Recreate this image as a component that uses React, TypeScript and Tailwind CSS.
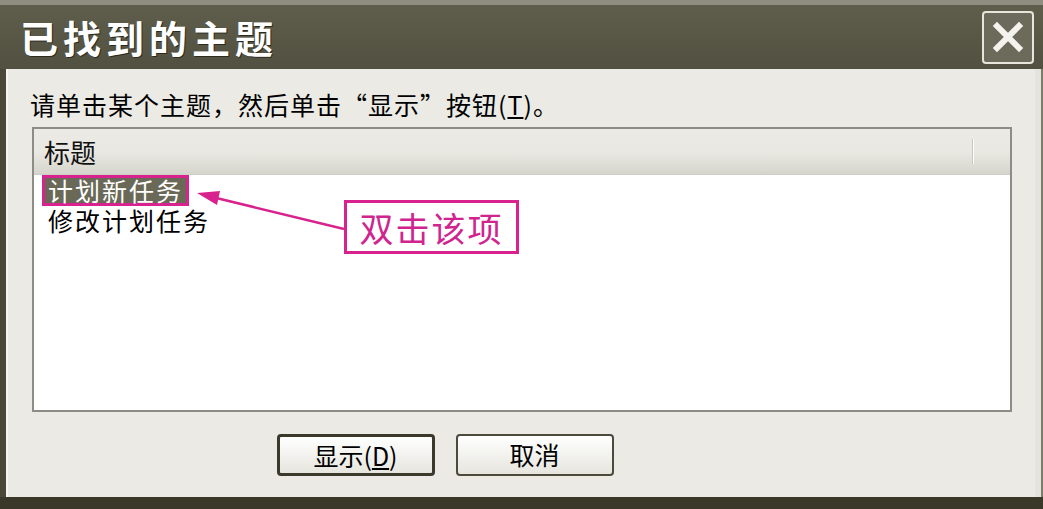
import React from 'react';

const cjk = { fontFamily: '"Noto Sans CJK SC", "Noto Sans", sans-serif' };

export default function App() {
    return (
        <div className="w-[1043px] h-[509px] flex flex-col bg-[#3d3b2b] overflow-hidden" style={cjk}>
            {/* top edge */}
            <div className="h-[5px] bg-[#8e8d80]" />

            {/* title bar */}
            <div className="h-[64px] flex items-center justify-between pl-[20px] pr-[9px] bg-gradient-to-b from-[#5f5d4b] to-[#525040]">
                <span className="text-[38px] leading-none tracking-[5px] text-white font-bold [text-shadow:1px_1px_0_#2c2b20]">
                    已找到的主题
                </span>
                <button className="w-[52px] h-[53px] rounded-[4px] border-2 border-[#e8e6dc] bg-[#6c6a5a] flex items-center justify-center">
                    <svg width="32" height="32" viewBox="0 0 32 32">
                        <path d="M5 5 L27 27 M27 5 L5 27" stroke="#f4f3ee" strokeWidth="6" strokeLinecap="square" />
                    </svg>
                </button>
            </div>

            {/* body */}
            <div className="flex-1 flex">
                <div className="w-[6px] bg-[#4a4836]" />
                <div className="flex-1 flex flex-col bg-[#ebeae4] border-l-2 border-[#f6f5f0] border-r-[6px] border-r-[#e4e3dc]">
                    <div className="relative flex-1 flex flex-col pl-[22px] pr-[23px] pt-[18px]">
                        <p className="text-[25px] leading-[34px] tracking-[1px] text-black">
                            请单击某个主题，然后单击“显示”按钮(<span className="underline">T</span>)。
                        </p>

                        {/* list view */}
                        <div className="mt-[6px] ml-[2px] h-[285px] flex flex-col border-2 border-[#8d8c86] bg-white">
                            <div className="h-[46px] flex bg-gradient-to-b from-[#ebeae4] via-[#e9e8e2] to-[#d6d5cd] border-b border-[#cfcec6]">
                                <div className="flex-1 flex items-center pl-[10px] text-[26px] text-[#111]">标题</div>
                                <div className="w-[2px] my-[10px] bg-[#c9c8c0] border-r border-white" />
                                <div className="w-[36px]" />
                            </div>
                            <div className="flex flex-col pl-[8px] text-[25px] tracking-[2px]">
                                <div className="self-start h-[31px] flex items-center px-[3px] border-[3px] border-[#d8238f] bg-[#6a6957] text-white leading-[25px]">
                                    计划新任务
                                </div>
                                <div className="mt-[1px] pl-[6px] h-[26px] flex items-center text-black leading-[26px]">修改计划任务</div>
                            </div>
                        </div>

                        {/* buttons */}
                        <div className="flex-1 flex items-center justify-center gap-[21px] pr-[152px]">
                            <button className="w-[158px] h-[42px] rounded-[4px] border-[3px] border-[#3b392b] bg-gradient-to-b from-white to-[#e6e5de] text-[25px] text-black">
                                显示(<span className="underline">D</span>)
                            </button>
                            <button className="w-[158px] h-[42px] rounded-[4px] border-2 border-[#4b4a3c] bg-gradient-to-b from-white to-[#e6e5de] text-[25px] text-black">
                                取消
                            </button>
                        </div>

                        {/* annotation */}
                        <svg className="absolute left-0 top-0 pointer-events-none" width="1000" height="300">
                            <line x1="336" y1="160" x2="200" y2="127" stroke="#d8238f" strokeWidth="2.5" />
                            <polygon points="189,124 212,122 209,136" fill="#d8238f" />
                        </svg>
                        <div className="absolute left-[336px] top-[131px] w-[175px] h-[54px] border-[3px] border-[#d8238f] bg-white flex items-center justify-center text-[34px] tracking-[2px] text-[#d0248e]">
                            双击该项
                        </div>
                    </div>
                </div>
                <div className="w-[2px] bg-[#7e7c6d]" />
            </div>

            {/* bottom edge */}
            <div className="h-[12px] bg-[#3a3828]" />
        </div>
    );
}
